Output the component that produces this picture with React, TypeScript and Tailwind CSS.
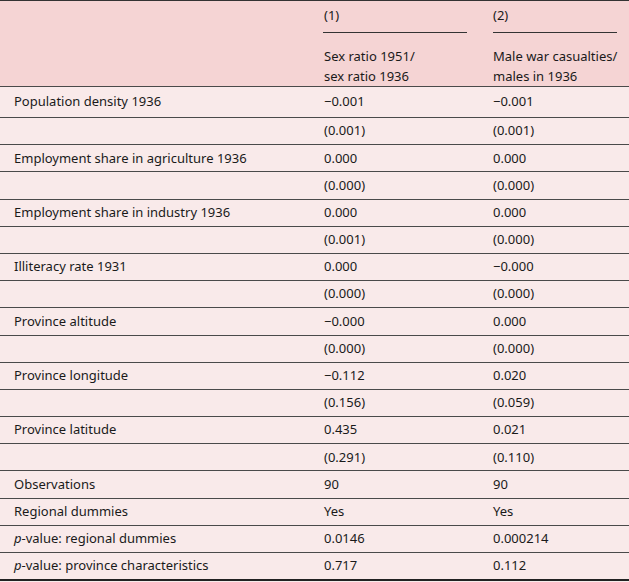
import React from "react";

type Row = { label: React.ReactNode; a: string; b: string; h: string };

const rows: Row[] = [
  { label: "Population density 1936", a: "−0.001", b: "−0.001", h: "h-[31px]" },
  { label: "", a: "(0.001)", b: "(0.001)", h: "h-[27.19px]" },
  { label: "Employment share in agriculture 1936", a: "0.000", b: "0.000", h: "h-[27.19px]" },
  { label: "", a: "(0.000)", b: "(0.000)", h: "h-[27.19px]" },
  { label: "Employment share in industry 1936", a: "0.000", b: "0.000", h: "h-[27.19px]" },
  { label: "", a: "(0.001)", b: "(0.000)", h: "h-[27.19px]" },
  { label: "Illiteracy rate 1931", a: "0.000", b: "−0.000", h: "h-[27.19px]" },
  { label: "", a: "(0.000)", b: "(0.000)", h: "h-[27.19px]" },
  { label: "Province altitude", a: "−0.000", b: "0.000", h: "h-[27.19px]" },
  { label: "", a: "(0.000)", b: "(0.000)", h: "h-[27.19px]" },
  { label: "Province longitude", a: "−0.112", b: "0.020", h: "h-[27.19px]" },
  { label: "", a: "(0.156)", b: "(0.059)", h: "h-[27.19px]" },
  { label: "Province latitude", a: "0.435", b: "0.021", h: "h-[27.19px]" },
  { label: "", a: "(0.291)", b: "(0.110)", h: "h-[27.19px]" },
  { label: "Observations", a: "90", b: "90", h: "h-[27.19px]" },
  { label: "Regional dummies", a: "Yes", b: "Yes", h: "h-[27.19px]" },
  {
    label: (
      <>
        <i>p</i>-value: regional dummies
      </>
    ),
    a: "0.0146",
    b: "0.000214",
    h: "h-[27.19px]",
  },
  {
    label: (
      <>
        <i>p</i>-value: province characteristics
      </>
    ),
    a: "0.717",
    b: "0.112",
    h: "h-[28px]",
  },
];

export default function App() {
  return (
    <div
      className="w-[629px] h-[582px] bg-[#f9eaea] text-[#1a1a1a] text-[13px] overflow-hidden"
      style={{ fontFamily: "'Noto Sans', Lato, sans-serif" }}
    >
      <div className="border-t border-[#333] bg-[#f5d4d4] h-[87px] border-b border-b-[#4a4a4a] grid grid-cols-[323px_170px_136px]">
        <div />
        <div className="flex flex-col">
          <div className="h-[23px] flex items-end pl-px leading-[18px]">(1)</div>
          <div className="mt-[8px] mr-[26px] border-t border-[#333]" />
          <div className="mt-[13px] pl-px leading-[20px]">
            Sex ratio 1951/
            <br />
            sex ratio 1936
          </div>
        </div>
        <div className="flex flex-col">
          <div className="h-[23px] flex items-end leading-[18px]">(2)</div>
          <div className="mt-[8px] mr-[12px] border-t border-[#333]" />
          <div className="mt-[13px] leading-[20px]">
            Male war casualties/
            <br />
            males in 1936
          </div>
        </div>
      </div>
      {rows.map((r, i) => (
        <div
          key={i}
          className={`${r.h} grid grid-cols-[323px_170px_136px] items-center ${
            i === rows.length - 1 ? "border-b-2 border-[#222]" : "border-b border-[#4a4a4a]"
          }`}
        >
          <div className="pl-[14px]">{r.label}</div>
          <div className="pl-px">{r.a}</div>
          <div>{r.b}</div>
        </div>
      ))}
    </div>
  );
}
